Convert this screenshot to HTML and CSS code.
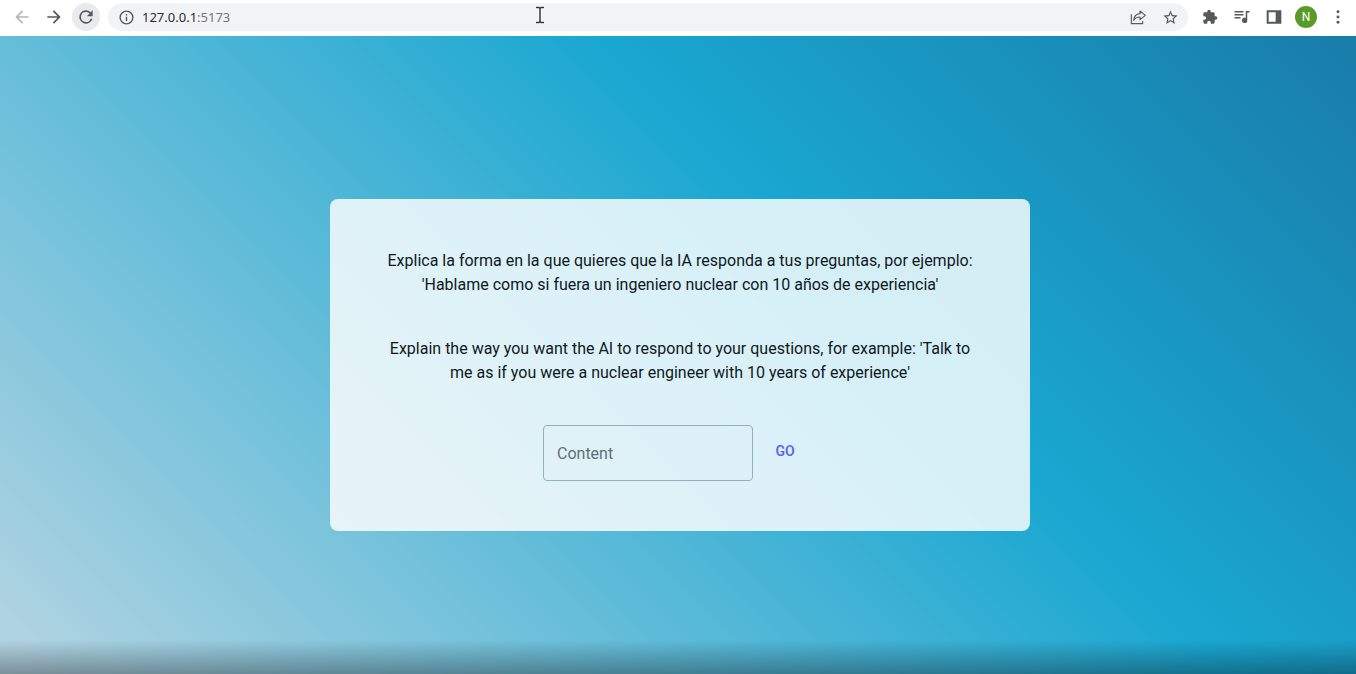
FILE: index.html
```
<!DOCTYPE html>
<html lang="es">
<head>
<meta charset="utf-8">
<title>127.0.0.1:5173</title>
<link rel="stylesheet" href="styles.css">
</head>
<body>
<header class="toolbar">
  <button class="tool tool-disabled" aria-label="Back"><svg viewBox="0 0 24 24"><path d="M20 11H7.8l5.6-5.6L12 4l-8 8 8 8 1.4-1.4L7.8 13H20z"/></svg></button>
  <button class="tool" aria-label="Forward"><svg viewBox="0 0 24 24"><path d="M12 4l-1.4 1.4 5.6 5.6H4v2h12.2l-5.6 5.6L12 20l8-8z"/></svg></button>
  <button class="tool tool-active" aria-label="Reload"><svg viewBox="0 0 24 24"><path d="M17.65 6.35A8 8 0 1 0 19.73 14h-2.08A6 6 0 1 1 12 6c1.66 0 3.14.69 4.22 1.78L13 11h7V4z"/></svg></button>
  <div class="omnibox">
    <button class="tool" aria-label="Site information"><svg viewBox="0 0 24 24"><path d="M11 7h2v2h-2zm0 4h2v6h-2zm1-9a10 10 0 1 0 0 20 10 10 0 0 0 0-20zm0 18a8 8 0 1 1 0-16 8 8 0 0 1 0 16z"/></svg></button>
    <div class="url" role="textbox" aria-label="Address" tabindex="0">127.0.0.1<span class="port">:5173</span></div>
    <button class="tool" aria-label="Share"><svg viewBox="0 0 24 24" class="line"><path d="M2 8v14h17v-4M15 3l8 6.500-8 6.500v-4c-4.500 0-7.500 1.500-9.500 5C6 11 9 7.500 15 7z"/></svg></button>
    <button class="tool" aria-label="Bookmark"><svg class="big" viewBox="0 0 24 24"><path d="M22 9.240l-7.190-.62L12 2 9.190 8.630 2 9.240l5.460 4.730L5.820 21 12 17.270 18.180 21l-1.630-7.030zM12 15.400l-3.760 2.270 1-4.280-3.320-2.880 4.380-.38L12 6.100l1.710 4.040 4.380.38-3.320 2.880 1 4.280z"/></svg></button>
  </div>
  <button class="tool" aria-label="Extensions"><svg viewBox="0 0 24 24"><path d="M20.500 11H19V7a2 2 0 0 0-2-2h-4V3.500a2.500 2.500 0 0 0-5 0V5H4a2 2 0 0 0-2 2v3.800h1.500a2.700 2.700 0 0 1 0 5.400H2V20c0 1.100.9 2 2 2h3.800v-1.500a2.700 2.700 0 0 1 5.400 0V22H17a2 2 0 0 0 2-2v-4h1.500a2.500 2.500 0 0 0 0-5z"/></svg></button>
  <button class="tool" aria-label="Media controls"><svg class="wide" viewBox="0 0 24 24"><path d="M2 4h12v2H2zm0 4h12v2H2zm0 4h8v2H2zM17 4h5v2h-3v10.500a3.500 3.500 0 1 1-2-3.150z"/></svg></button>
  <button class="tool" aria-label="Side panel"><svg viewBox="0 0 24 24"><path d="M1 2v20h22V2zm3 3h10.500v14H4z"/></svg></button>
  <button class="tool" aria-label="Profile"><span class="avatar">N</span></button>
  <button class="tool" aria-label="Menu"><svg viewBox="0 0 24 24"><circle cx="12" cy="4" r="2.200"/><circle cx="12" cy="12" r="2.200"/><circle cx="12" cy="20" r="2.200"/></svg></button>
  <svg class="cursor" viewBox="0 0 10 18"><path class="halo" d="M1 1.500h3l1 1 1-1h3M5 2.500v13M1 16.500h3l1-1 1 1h3"/><path d="M1 1.500h3l1 1 1-1h3M5 2.500v13M1 16.500h3l1-1 1 1h3"/></svg>
</header>
<main class="page">
  <section class="card">
    <p class="text">Explica la forma en la que quieres que la IA responda a tus preguntas, por ejemplo: 'Hablame como si fuera un ingeniero nuclear con 10 años de experiencia'</p>
    <p class="text">Explain the way you want the AI to respond to your questions, for example: 'Talk to me as if you were a nuclear engineer with 10 years of experience'</p>
    <form class="form">
      <input class="field" type="text" placeholder="Content" aria-label="Content">
      <button class="go" type="button">GO</button>
    </form>
  </section>
  <div class="shade"></div>
</main>
</body>
</html>
```
FILE: styles.css
```
* { box-sizing: border-box; }

body {
  margin: 0;
  min-height: 100vh;
  display: flex;
  flex-direction: column;
  font-family: Roboto, "Liberation Sans", sans-serif;
}

.toolbar {
  position: relative;
  display: flex;
  align-items: center;
  gap: 4px;
  height: 36px;
  padding: 0 4px 2px 8px;
  background: #fff;
}

.tool {
  display: flex;
  flex: none;
  align-items: center;
  justify-content: center;
  width: 28px;
  height: 28px;
  padding: 0;
  border: 0;
  border-radius: 50%;
  background: none;
  color: #55585c;
}
.tool svg { width: 16px; height: 16px; fill: currentColor; }
.tool .big { width: 17px; height: 17px; }
.tool .wide { width: 18px; height: 18px; }
.tool .line { fill: none; stroke: currentColor; stroke-width: 1.7; stroke-linejoin: round; }
.tool:nth-child(-n+2) svg { width: 20px; height: 20px; }
.tool-active svg { width: 20px; height: 20px; }
.tool-disabled { color: #b4b6b9; }
.tool-active { background: #e8eaed; }
.omnibox .tool:first-child svg { width: 17px; height: 17px; }

.omnibox {
  display: flex;
  flex: 1;
  align-items: center;
  gap: 4px;
  height: 28px;
  margin: 0 4px;
  padding: 0 4px;
  border-radius: 14px;
  background: #f1f3f4;
}

.url {
  flex: 1;
  margin-left: -2px;
  font: 13px/20px "Noto Sans", sans-serif;
  color: #2b2c30;
  outline: 0;
}
.port { color: #73777b; }

.avatar {
  width: 22px;
  height: 22px;
  border-radius: 50%;
  background: #5a9a28;
  color: #fff;
  font: 12px/22px Roboto, sans-serif;
}

.cursor {
  position: absolute;
  left: 535px;
  top: 6px;
  width: 10px;
  height: 18px;
  overflow: visible;
  fill: none;
  stroke: #33343a;
  stroke-width: 1.5;
}
.cursor .halo { stroke: #fff; stroke-width: 3; }

.page {
  position: relative;
  display: flex;
  flex: 1;
  align-items: center;
  justify-content: center;
  padding: 20px 0 0 4px;
  background: linear-gradient(45deg, #b6d5e2, #19a7d1 62%, #197ca9);
}

.card {
  display: flex;
  flex-direction: column;
  gap: 40px;
  width: 100%;
  max-width: 700px;
  padding: 50px;
  border-radius: 8px;
  background: rgba(255, 255, 255, 0.82);
}

.text {
  margin: 0;
  font-size: 16px;
  line-height: 24px;
  text-align: center;
  color: #10191d;
}

.form {
  display: flex;
  align-items: center;
  justify-content: center;
}

.field {
  width: 210px;
  height: 56px;
  padding: 0 13px;
  border: 1px solid #93b0bb;
  border-radius: 4px;
  background: none;
  font: 16px/24px Roboto, sans-serif;
}
.field::placeholder { color: #5f6f76; opacity: 1; }

.go {
  width: 64px;
  height: 36px;
  margin-bottom: 4px;
  padding: 0;
  border: 0;
  border-radius: 4px;
  background: none;
  color: #5f66ee;
  font: 600 14px/24px Roboto, sans-serif;
}

.shade {
  position: absolute;
  right: 0;
  bottom: 0;
  left: 0;
  height: 34px;
  background: linear-gradient(transparent, rgba(0, 0, 0, 0.32));
  pointer-events: none;
}
```
